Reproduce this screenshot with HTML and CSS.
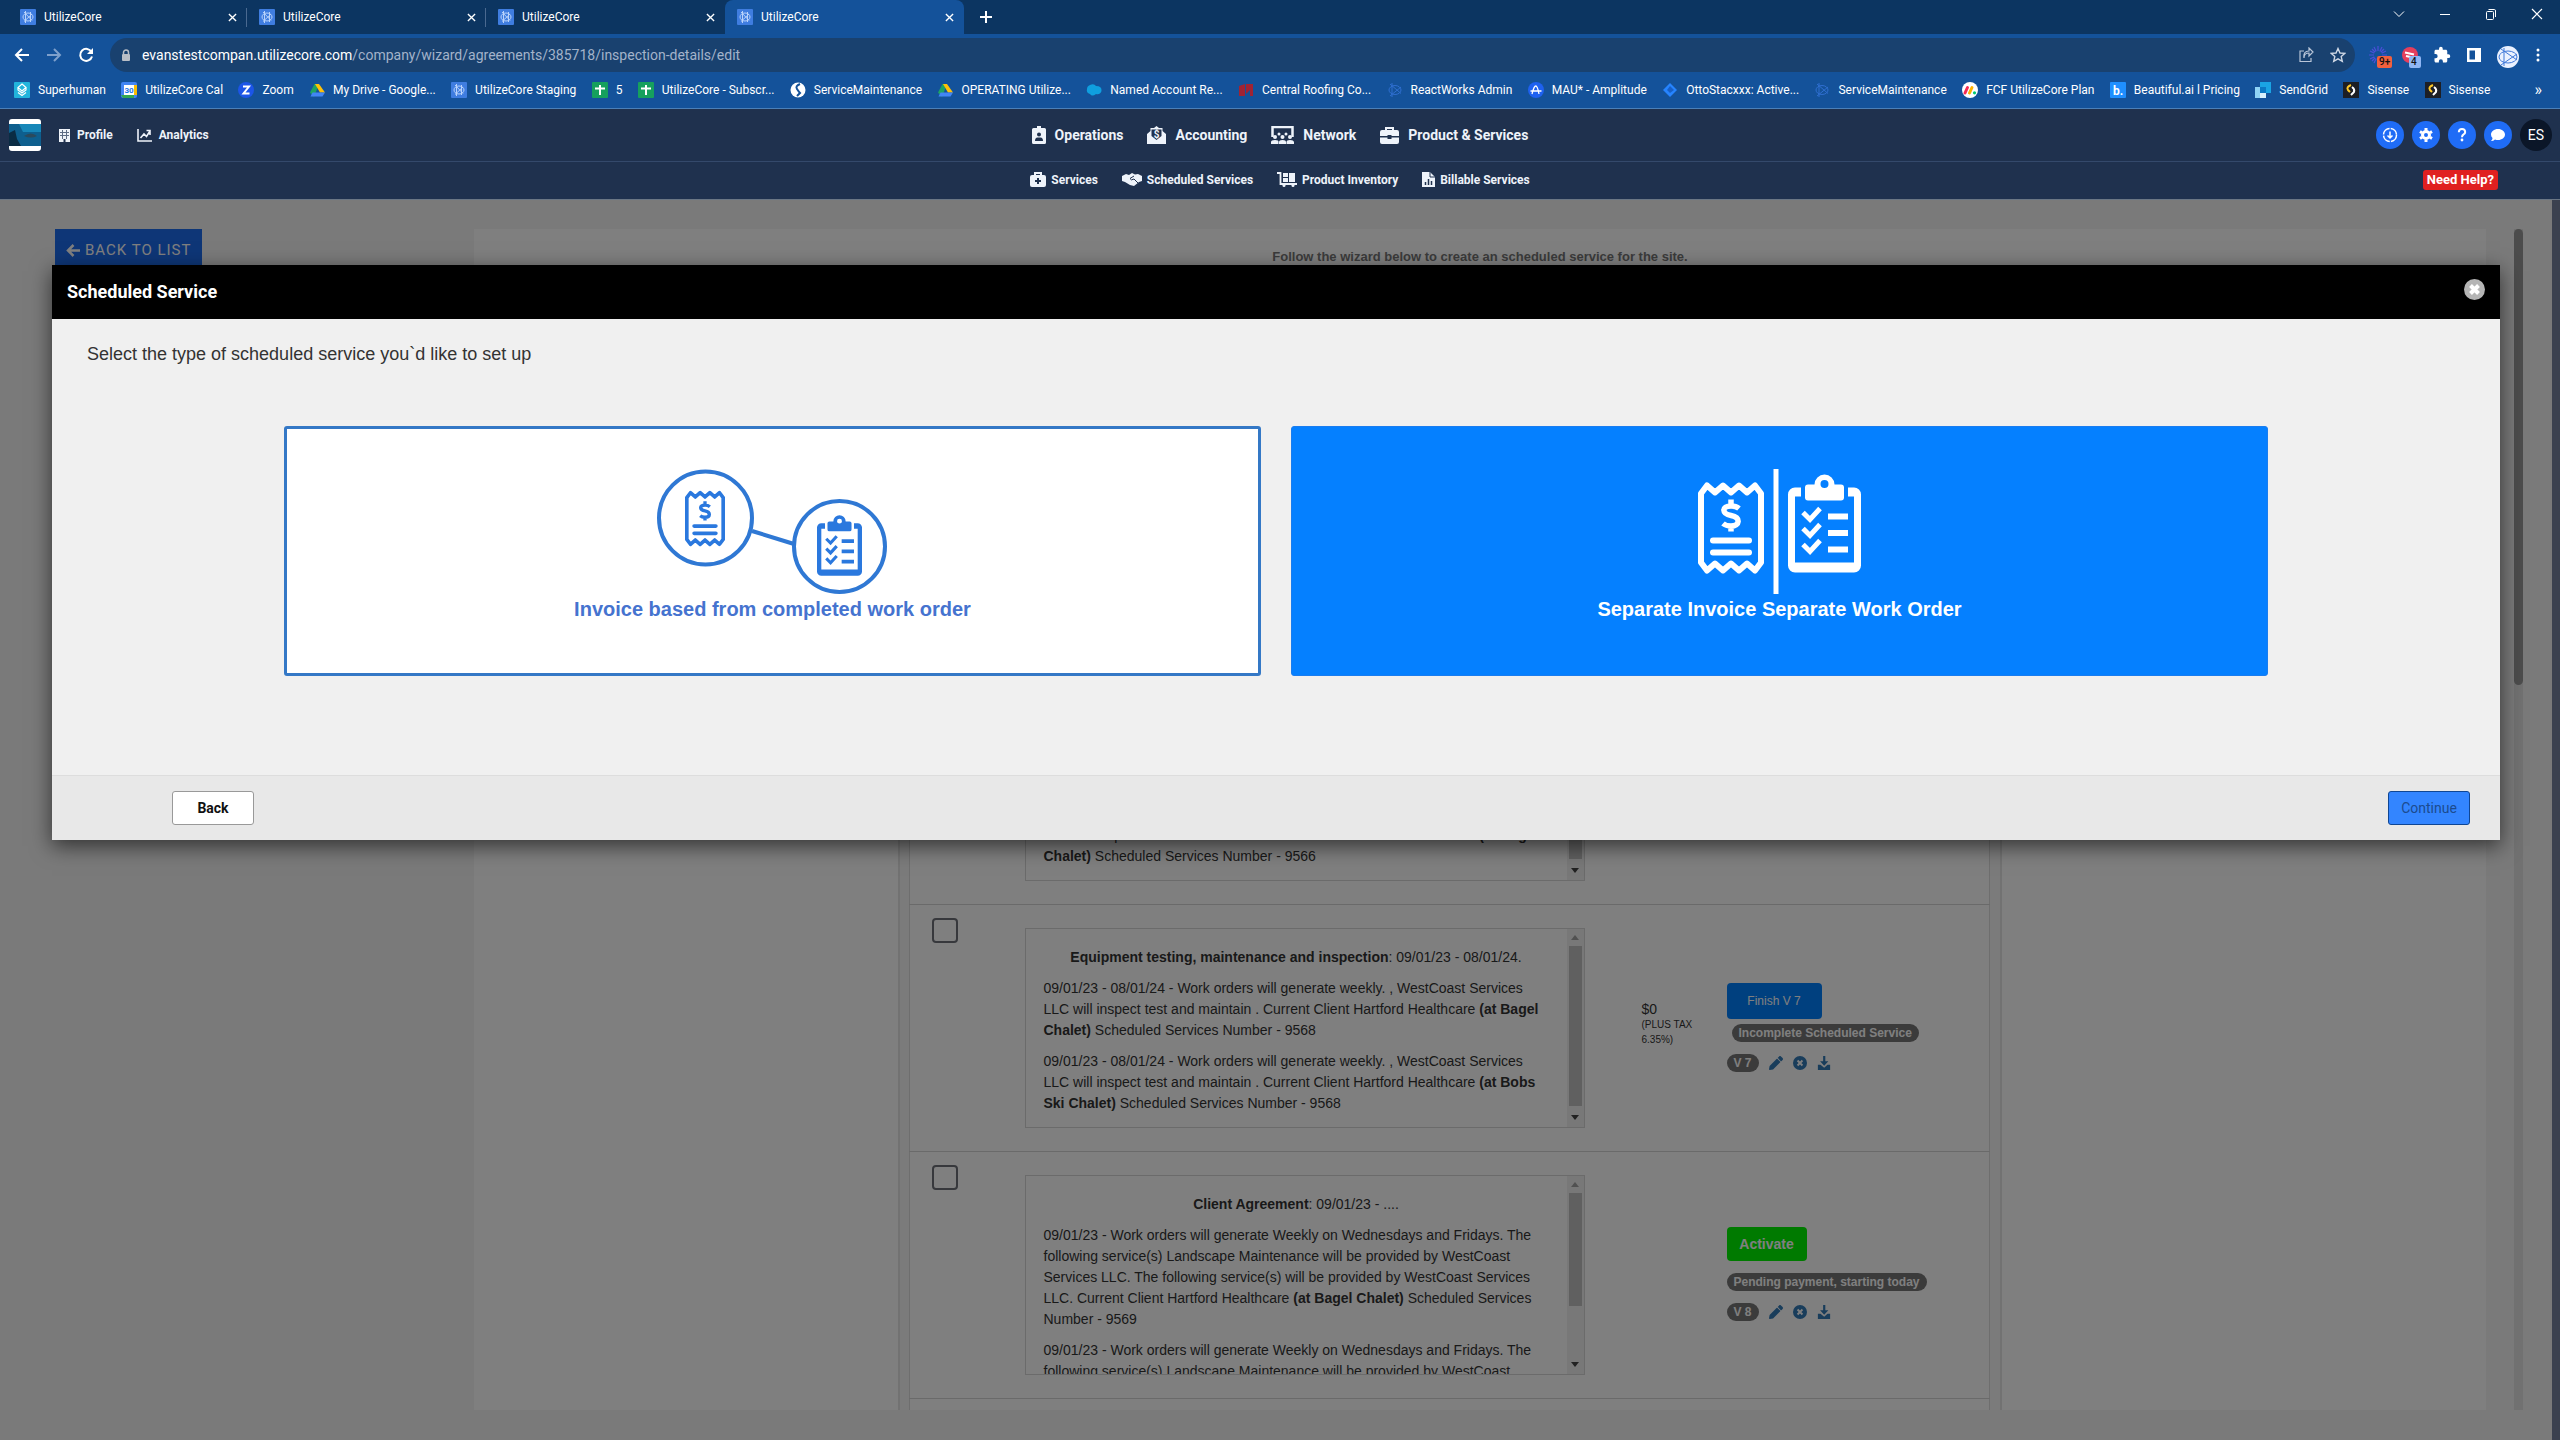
FILE: index.html
```html
<!DOCTYPE html>
<html lang="en">
<head>
<meta charset="utf-8">
<title>UtilizeCore</title>
<link rel="stylesheet" href="styles.css">
</head>
<body>
<svg class="sprite" aria-hidden="true">
  <symbol id="i-core" viewBox="0 0 16 16"><rect width="16" height="16" rx="1" fill="#3f7de0"/><g fill="none" stroke="#b9d3fb" stroke-width="1"><path d="M5.500 2V14M4 3L12 11.500M12 5L4 12.500M10.500 3V13"/><ellipse cx="8" cy="8" rx="5" ry="4"/></g></symbol>
  <symbol id="i-core-dark" viewBox="0 0 16 16"><g fill="none" stroke="#2f6fd0" stroke-width="1"><path d="M5 1V15M3 2L14 11.500M14 5L3 14"/><ellipse cx="8" cy="8" rx="6" ry="4.500"/></g></symbol>
  <symbol id="i-x" viewBox="0 0 10 10"><path d="M1 1L9 9M9 1L1 9" stroke="currentColor" stroke-width="1.500"/></symbol>
  <symbol id="i-sheet" viewBox="0 0 16 16"><rect width="16" height="16" rx="1" fill="#16a05d"/><path d="M8 3V13M3 6.500H13" stroke="#fff" stroke-width="2"/></symbol>
  <symbol id="i-drive" viewBox="0 0 16 16"><path d="M5.500 2H10L5 15 1 10.500Z" fill="#1ea362"/><path d="M6 2H10L16 10.500H11Z" fill="#ffc107"/><path d="M3.500 10.500H16L13.500 14.500H1.500Z" fill="#4285f4"/></symbol>
  <symbol id="i-sisense" viewBox="0 0 16 16"><rect width="16" height="16" fill="#1d1f24"/><path d="M8 3Q3 5 5 8L7 10" fill="none" stroke="#ffc928" stroke-width="2"/><path d="M9 5Q12 7 11 10L8 13" fill="none" stroke="#fff" stroke-width="2"/></symbol>
  <symbol id="i-pencil" viewBox="0 0 512 512"><path fill="currentColor" d="M497.900 142.100l-46.100 46.100c-4.700 4.700-12.300 4.700-17 0l-111-111c-4.700-4.700-4.700-12.300 0-17l46.100-46.100c18.700-18.700 49.100-18.700 67.900 0l60.100 60.100c18.800 18.700 18.800 49.100 0 67.900zM284.200 99.800L21.600 362.400.4 483.900c-2.900 16.400 11.400 30.600 27.800 27.800l121.500-21.300 262.600-262.600c4.700-4.700 4.700-12.300 0-17l-111-111c-4.800-4.700-12.400-4.700-17.100 0z"/></symbol>
  <symbol id="i-remove" viewBox="0 0 16 16"><circle cx="8" cy="8" r="8" fill="currentColor"/><path d="M5.200 5.200L10.800 10.800M10.800 5.200L5.200 10.800" stroke="#fff" stroke-width="2.200"/></symbol>
  <symbol id="i-download" viewBox="0 0 16 16"><path fill="currentColor" d="M7 0h2.500v6H13L8.200 11 3.500 6H7zM1 10h3l4.200 3.500L12 10h3v6H1z"/></symbol>
  <symbol id="i-receipt" viewBox="0 0 66 95"><path d="M3 13L9 5 17 12 25 5 33 12 41 5 49 12 57 5 63 13V82L57 90 49 83 41 90 33 83 25 90 17 83 9 90 3 82Z" fill="none" stroke="currentColor" stroke-width="6" stroke-linejoin="round"/><path d="M15 60H51M15 72H51" stroke="currentColor" stroke-width="6" stroke-linecap="round"/><path d="M41 28Q38 25.500 33 25.500C23 25.500 24 33.500 33 35C43 37 42 45.500 33 45.500Q28 45.500 25 43M33 19V26M33 45V51" fill="none" stroke="currentColor" stroke-width="5.500"/></symbol>
  <symbol id="i-clipboard" viewBox="0 0 73 98"><path fill="currentColor" fill-rule="evenodd" d="M7 13H13V22H7V88H66V22H60V13H66A7 7 0 0 1 73 20V91A7 7 0 0 1 66 98H7A7 7 0 0 1 0 91V20A7 7 0 0 1 7 13ZM20 10H26.500A10 10 0 0 1 46.500 10H53A3 3 0 0 1 56 13V23A3 3 0 0 1 53 26H20A3 3 0 0 1 17 23V13A3 3 0 0 1 20 10ZM36.500 5.500A4 4 0 1 0 36.500 13.500 4 4 0 1 0 36.500 5.500Z"/><path d="M15 38L22 45 32 34M15 54L22 61 32 50M15 70L22 77 32 66" fill="none" stroke="currentColor" stroke-width="5"/><path d="M40 42H60M40 58.500H60M40 75H60" stroke="currentColor" stroke-width="6"/></symbol>
</svg>

<header class="browser">
  <div class="tabs">
    <div class="tab"><svg class="i16"><use href="#i-core"/></svg><span>UtilizeCore</span><button class="tab-x" aria-label="Close tab"><svg><use href="#i-x"/></svg></button></div>
    <div class="tab"><svg class="i16"><use href="#i-core"/></svg><span>UtilizeCore</span><button class="tab-x" aria-label="Close tab"><svg><use href="#i-x"/></svg></button></div>
    <div class="tab"><svg class="i16"><use href="#i-core"/></svg><span>UtilizeCore</span><button class="tab-x" aria-label="Close tab"><svg><use href="#i-x"/></svg></button></div>
    <div class="tab tab-active"><svg class="i16"><use href="#i-core"/></svg><span>UtilizeCore</span><button class="tab-x" aria-label="Close tab"><svg><use href="#i-x"/></svg></button></div>
    <button class="new-tab" aria-label="New tab"><svg width="12" height="12" viewBox="0 0 12 12"><path d="M6 0V12M0 6H12" stroke="#fff" stroke-width="2"/></svg></button>
    <div class="window-controls">
      <button aria-label="Search tabs"><svg viewBox="0 0 12 12"><path d="M1 3.500L6 8.500 11 3.500" fill="none" stroke="#fff"/></svg></button>
      <button aria-label="Minimize"><svg viewBox="0 0 12 12"><path d="M1 6.500H11" stroke="#fff"/></svg></button>
      <button aria-label="Restore"><svg viewBox="0 0 12 12"><path d="M3.500 1.500H9.500Q10.500 1.500 10.500 3V9" fill="none" stroke="#fff"/><rect x="1.500" y="3.500" width="7" height="8" rx="1" fill="none" stroke="#fff"/></svg></button>
      <button aria-label="Close"><svg viewBox="0 0 12 12"><path d="M1 1L11 11M11 1L1 11" stroke="#fff" stroke-width="1.200"/></svg></button>
    </div>
  </div>
  <div class="toolbar">
    <div class="nav-buttons">
      <button aria-label="Back"><svg viewBox="0 0 16 16"><path d="M15 8H2M8 2L2 8 8 14" fill="none" stroke="#fff" stroke-width="2"/></svg></button>
      <button aria-label="Forward"><svg viewBox="0 0 16 16"><path d="M1 8H14M8 2L14 8 8 14" fill="none" stroke="#7ea0cc" stroke-width="2"/></svg></button>
      <button aria-label="Reload"><svg viewBox="0 0 16 16"><path d="M13.500 5A6 6 0 1 0 14 9.500" fill="none" stroke="#fff" stroke-width="2"/><path d="M15 1V7H9Z" fill="#fff"/></svg></button>
    </div>
    <div class="url">
      <svg class="lock" viewBox="0 0 10 12"><path d="M2.500 5V3.500A2.500 2.500 0 0 1 7.500 3.500V5" fill="none" stroke="#b9bec6" stroke-width="1.500"/><rect x="1" y="5" width="8" height="7" rx="1" fill="#b9bec6"/></svg>
      <span class="url-text"><b>evanstestcompan.utilizecore.com</b>/company/wizard/agreements/385718/inspection-details/edit</span>
      <svg class="i16" viewBox="0 0 16 16"><path d="M6 4H2V14.500H13V11M6 11Q6 6 11 6V9L15 5 11 1V4Q5 4 6 11Z" fill="none" stroke="#b8c5d8" stroke-width="1.200"/></svg>
      <svg class="i16" viewBox="0 0 16 16"><path d="M8 1.500L10 6 14.800 6.400 11.200 9.600 12.300 14.300 8 11.800 3.700 14.300 4.800 9.600 1.200 6.400 6 6Z" fill="none" stroke="#d0d9e6" stroke-width="1.400"/></svg>
    </div>
    <div class="extensions">
      <span class="ext"><svg viewBox="0 0 18 18"><path d="M9 0V18M0 9H18M3 3L15 15M15 3L3 15M5 1L13 17M13 1L5 17M1 5L17 13M17 5L1 13" stroke="#4b4fd8" stroke-width="1.200"/><circle cx="9" cy="9" r="4" fill="#14529a"/></svg><i class="count count-red">9+</i></span>
      <span class="ext"><svg viewBox="0 0 18 18"><circle cx="9" cy="9" r="8" fill="#e53e5c"/><path d="M4 6.500L13 8.500M5 10L14 12" stroke="#fff" stroke-width="2"/></svg><i class="count count-blue">4</i></span>
      <span class="ext"><svg viewBox="0 0 24 24"><path fill="#fff" d="M20.500 11H19V7c0-1.100-.9-2-2-2h-4V3.500a2.500 2.500 0 0 0-5 0V5H4c-1.100 0-2 .9-2 2v3.800h1.500a2.700 2.700 0 0 1 0 5.400H2V20c0 1.100.9 2 2 2h3.800v-1.500a2.700 2.700 0 0 1 5.400 0V22H17c1.100 0 2-.9 2-2v-4h1.500a2.500 2.500 0 0 0 0-5z"/></svg></span>
      <span class="ext"><svg viewBox="0 0 18 18"><path fill="#fff" fill-rule="evenodd" d="M2 2H16V16H2ZM4.500 4.500H10V13.500H4.500Z"/></svg></span>
      <span class="ext ext-avatar"><svg viewBox="0 0 22 22"><circle cx="11" cy="11" r="11" fill="#eaf1ff"/><g fill="none" stroke="#3f78d8"><path d="M7 2V20M4 3L20 14M4 19L20 8"/><ellipse cx="11" cy="11" rx="9" ry="6"/></g></svg></span>
      <span class="ext"><svg viewBox="0 0 18 18"><g fill="#fff"><circle cx="9" cy="4" r="1.500"/><circle cx="9" cy="9" r="1.500"/><circle cx="9" cy="14" r="1.500"/></g></svg></span>
    </div>
  </div>
  <nav class="bookmarks">
    <div class="bookmark-list">
      <a href="#"><svg class="i16" viewBox="0 0 16 16"><rect width="16" height="16" rx="1" fill="#22b4dc"/><path d="M8 2L12 5.500 8 9 4 5.500ZM4 10.500L8 13.500 12 10.500M4 6V8L8 11 12 8V6" fill="none" stroke="#fff" stroke-width="1.200"/></svg>Superhuman</a>
      <a href="#"><svg class="i16" viewBox="0 0 16 16"><rect width="16" height="16" rx="2" fill="#4285f4"/><path d="M13 3H16V13H13Z" fill="#fbbc04"/><path d="M0 13H13V16H2Z" fill="#34a853"/><rect x="3" y="3" width="10" height="10" fill="#fff"/><text x="8" y="11" text-anchor="middle" font-family="Roboto, sans-serif" font-size="8" font-weight="700" fill="#1a73e8">30</text></svg>UtilizeCore Cal</a>
      <a href="#"><svg class="i16" viewBox="0 0 16 16"><circle cx="8" cy="8" r="8" fill="#1c55e8"/><path d="M5 4.500H11L5.500 11.500H11.500" fill="none" stroke="#fff" stroke-width="2"/></svg>Zoom</a>
      <a href="#"><svg class="i16"><use href="#i-drive"/></svg>My Drive - Google...</a>
      <a href="#"><svg class="i16"><use href="#i-core"/></svg>UtilizeCore Staging</a>
      <a href="#"><svg class="i16"><use href="#i-sheet"/></svg>5</a>
      <a href="#"><svg class="i16"><use href="#i-sheet"/></svg>UtilizeCore - Subscr...</a>
      <a href="#"><svg class="i16" viewBox="0 0 16 16"><circle cx="8" cy="8" r="7.500" fill="#fff"/><path d="M10 2Q5 4 7 7T10 11L7 14" fill="none" stroke="#14529a" stroke-width="2"/></svg>ServiceMaintenance</a>
      <a href="#"><svg class="i16"><use href="#i-drive"/></svg>OPERATING Utilize...</a>
      <a href="#"><svg class="i16" viewBox="0 0 16 16"><path d="M4 3Q8 1 10 4Q16 4 15.500 9Q14 13 10 12Q6 15 4 12Q0 11 1 7Q1 4 4 3Z" fill="#0f9fdf"/></svg>Named Account Re...</a>
      <a href="#"><svg class="i16" viewBox="0 0 16 16"><path d="M1 4L7 2V14H1ZM8 2H15V14H12V8L8 12Z" fill="#a02333"/></svg>Central Roofing Co...</a>
      <a href="#"><svg class="i16"><use href="#i-core-dark"/></svg>ReactWorks Admin</a>
      <a href="#"><svg class="i16" viewBox="0 0 16 16"><circle cx="8" cy="8" r="8" fill="#1e61f0"/><path d="M2.500 9H13.500M4 12Q8-4 11 12" fill="none" stroke="#fff" stroke-width="1.300"/></svg>MAU* - Amplitude</a>
      <a href="#"><svg class="i16" viewBox="0 0 16 16"><path d="M8 1L15 8 8 15 1 8Z" fill="#2684ff"/><path d="M8 4L12 8 8 11 5 8Z" fill="#1760c8"/></svg>OttoStacxxx: Active...</a>
      <a href="#"><svg class="i16"><use href="#i-core-dark"/></svg>ServiceMaintenance</a>
      <a href="#"><svg class="i16" viewBox="0 0 16 16"><circle cx="8" cy="8" r="8" fill="#fff"/><path d="M3 11L5.500 5.500" stroke="#f62b54" stroke-width="3" stroke-linecap="round"/><path d="M7.500 11L10 5.500" stroke="#ffb400" stroke-width="3" stroke-linecap="round"/><circle cx="12.500" cy="10.800" r="1.600" fill="#00ca72"/></svg>FCF UtilizeCore Plan</a>
      <a href="#"><svg class="i16" viewBox="0 0 16 16"><rect width="16" height="16" rx="1" fill="#1f8fff"/><text x="8" y="13" text-anchor="middle" font-family="Roboto, sans-serif" font-size="12" font-weight="700" fill="#fff">b.</text></svg>Beautiful.ai l Pricing</a>
      <a href="#"><svg class="i16" viewBox="0 0 16 16"><path d="M5 0H16V11H5Z" fill="#1aa4e4"/><path d="M0 5H5V16H0Z" fill="#8fd3f5"/><path d="M5 11H11V16H5Z" fill="#d8f0fc"/><path d="M5 5H11V11H5Z" fill="#0b78c4"/></svg>SendGrid</a>
      <a href="#"><svg class="i16"><use href="#i-sisense"/></svg>Sisense</a>
      <a href="#"><svg class="i16"><use href="#i-sisense"/></svg>Sisense</a>
    </div>
    <button class="more" aria-label="More bookmarks">»</button>
  </nav>
</header>

<div class="app-nav">
  <div class="nav-left">
    <a href="#" class="logo" aria-label="Company"><svg viewBox="0 0 32 32"><rect width="32" height="32" rx="3" fill="#fff"/><path d="M0 5H32V27H0Z" fill="#0e5f8e"/><path d="M10 5H32V13H14Z" fill="#1787b8"/><path d="M0 14L6 11 8 20 12 27H0Z" fill="#0a2c44"/><path d="M15 17Q22 12 28 17Q22 20 15 17Z" fill="#2b4a5c"/></svg></a>
    <a href="#"><svg width="11" height="13" viewBox="0 0 11 13"><rect width="11" height="13" fill="#eef3fa"/><path d="M3.500 1V10M7.500 1V10M1 3.500H10M1 6.500H10" stroke="#5b6b84"/><path d="M4.500 10H6.500V13H4.500Z" fill="#1f314e"/></svg>Profile</a>
    <a href="#"><svg width="15" height="13" viewBox="0 0 15 13"><path d="M1 0V12H15M3.500 9L7 5 9.500 7.500 13 2M13 6V1.500H9.500" fill="none" stroke="#eef3fa" stroke-width="1.600"/></svg>Analytics</a>
  </div>
  <nav class="nav-center">
    <a href="#"><svg width="14" height="18" viewBox="0 0 14 18"><path fill="currentColor" fill-rule="evenodd" d="M5 0H9V2H12.500A1.500 1.500 0 0 1 14 3.500V16.500A1.500 1.500 0 0 1 12.500 18H1.500A1.500 1.500 0 0 1 0 16.500V3.500A1.500 1.500 0 0 1 1.500 2H5ZM7 6.500A2 2 0 1 0 7 10.500 2 2 0 1 0 7 6.500ZM3 15H11Q11 11.500 8.500 11.500H5.500Q3 11.500 3 15Z"/></svg>Operations</a>
    <a href="#"><svg width="19" height="18" viewBox="0 0 19 18"><path fill="currentColor" d="M0 8L3.500 5V2H7L9.500 0 12 2H15.500V5L19 8V18H0Z"/><path d="M4.500 3.500H14.500V10L9.500 14 4.500 10Z" fill="#1f314e"/><text x="9.500" y="12" text-anchor="middle" font-family="Roboto, sans-serif" font-size="10" font-weight="700" fill="currentColor">$</text></svg>Accounting</a>
    <a href="#"><svg width="23" height="18" viewBox="0 0 23 18"><path d="M1.500 11V1H21.500V11" fill="none" stroke="currentColor" stroke-width="2.500"/><g fill="currentColor"><circle cx="4" cy="11" r="2"/><circle cx="11.500" cy="11" r="2"/><circle cx="19" cy="11" r="2"/><circle cx="8" cy="8" r="1.500"/><circle cx="15" cy="8" r="1.500"/><path d="M0 18V16Q0 14 4 14T7.500 16V18ZM8 18V16Q8 14 11.500 14T15 16V18ZM15.500 18V16Q15.500 14 19 14T23 16V18Z"/></g></svg>Network</a>
    <a href="#"><svg width="19" height="18" viewBox="0 0 19 18"><path d="M6 5V2H13V5" fill="none" stroke="currentColor" stroke-width="2"/><path fill="currentColor" d="M2 4H17A2 2 0 0 1 19 6V10H11.500V9H7.500V10H0V6A2 2 0 0 1 2 4ZM0 11.500H7.500V13H11.500V11.500H19V16A2 2 0 0 1 17 18H2A2 2 0 0 1 0 16Z"/></svg>Product &amp; Services</a>
  </nav>
  <div class="nav-right">
    <button class="round" aria-label="Downloads"><svg viewBox="0 0 16 16"><circle cx="8" cy="8" r="6.500" fill="none" stroke="#fff" stroke-width="1.500" stroke-dasharray="9 1.200"/><path d="M8 4.500V11M5.500 8.500L8 11 10.500 8.500" fill="none" stroke="#fff" stroke-width="1.500"/></svg></button>
    <button class="round" aria-label="Settings"><svg viewBox="0 0 16 16"><circle cx="8" cy="8" r="3.500" fill="none" stroke="#fff" stroke-width="3"/><path d="M8 1V3.500M8 12.500V15M2 4.500L4 5.700M12 10.300L14 11.500M2 11.500L4 10.300M12 5.700L14 4.500" stroke="#fff" stroke-width="3"/></svg></button>
    <button class="round" aria-label="Help"><svg viewBox="0 0 16 16"><path d="M4.800 5.200Q5 2 8 2T11.200 5Q11.200 6.500 9.500 7.500 8 8.300 8 10.200" fill="none" stroke="#fff" stroke-width="2"/><circle cx="8" cy="13" r="1.400" fill="#fff"/></svg></button>
    <button class="round" aria-label="Chat"><svg viewBox="0 0 16 16"><path d="M8 2C12 2 15 4.500 15 7.500S12 13 8 13Q6.500 13 5 12.500 3.500 14 1 14 2.800 12 2.500 11 1 9.500 1 7.500C1 4.500 4 2 8 2Z" fill="#fff"/></svg></button>
    <button class="round user">ES</button>
  </div>
</div>
<div class="sub-nav">
  <nav class="nav-center">
    <a href="#"><svg width="16" height="15" viewBox="0 0 16 15"><path d="M5 4V1H11V4" fill="none" stroke="currentColor" stroke-width="2"/><rect y="3" width="16" height="12" rx="2" fill="currentColor"/><path d="M8 6V12M5 9H11" stroke="#1f314e" stroke-width="2"/></svg>Services</a>
    <a href="#"><svg width="20" height="13" viewBox="0 0 20 13"><path fill="currentColor" d="M0 3L4 1 7 2 10 0 13 1.500 16 1 20 3V8L17 9 12 13 8 12 3 9 0 8Z"/><path d="M12 3L8 5.500Q9 8 12 6L16 10" fill="none" stroke="#1f314e"/></svg>Scheduled Services</a>
    <a href="#"><svg width="20" height="15" viewBox="0 0 20 15"><path d="M0 1H3.500V12H20" fill="none" stroke="currentColor" stroke-width="1.800"/><path d="M6 1H11V5H6ZM12 1H18V10H12ZM6 6H11V10H6Z" fill="currentColor"/><circle cx="7" cy="13.500" r="1.500" fill="currentColor"/><circle cx="16" cy="13.500" r="1.500" fill="currentColor"/></svg>Product Inventory</a>
    <a href="#"><svg width="13" height="15" viewBox="0 0 13 15"><path d="M0 0H8L13 5V15H0Z" fill="currentColor"/><path d="M8 0V5H13" fill="none" stroke="#1f314e"/><path d="M3.500 13V10M6.500 13V7M9.500 13V9" stroke="#1f314e" stroke-width="1.500"/></svg>Billable Services</a>
  </nav>
  <a href="#" class="need-help">Need Help?</a>
</div>

<div class="stage">
  <main class="page">
    <div class="side"><button class="back-list"><svg width="14" height="13" viewBox="0 0 14 13"><path d="M14 6.500H2M7.500 1L2 6.500 7.500 12" fill="none" stroke="currentColor" stroke-width="2.500"/></svg>BACK TO LIST</button></div>
    <section class="panel">
      <p class="intro">Follow the wizard below to create an scheduled service for the site.</p>
      <div class="wizard">
        <table class="services">
          <colgroup><col class="c-check"><col class="c-text"><col class="c-price"><col></colgroup>
          <tr>
            <td></td>
            <td class="desc"><div class="box"><div class="box-text box-text-end"><p>09/01/23 - 08/01/24 - Work orders will generate weekly. , WestCoast Services LLC will inspect test and maintain . Current Client Hartford Healthcare <b>(at Bagel Chalet)</b> Scheduled Services Number - 9566</p></div><div class="bar"><i class="up"></i><span class="thumb"></span><i class="down"></i></div></div></td>
            <td></td><td></td>
          </tr>
          <tr>
            <td class="check"><input type="checkbox" aria-label="Select service 9568"></td>
            <td class="desc"><div class="box"><div class="box-text"><p class="title"><b>Equipment testing, maintenance and inspection</b>: 09/01/23 - 08/01/24.</p><p>09/01/23 - 08/01/24 - Work orders will generate weekly. , WestCoast Services LLC will inspect test and maintain . Current Client Hartford Healthcare <b>(at Bagel Chalet)</b> Scheduled Services Number - 9568</p><p>09/01/23 - 08/01/24 - Work orders will generate weekly. , WestCoast Services LLC will inspect test and maintain . Current Client Hartford Healthcare <b>(at Bobs Ski Chalet)</b> Scheduled Services Number - 9568</p></div><div class="bar"><i class="up"></i><span class="thumb"></span><i class="down"></i></div></div></td>
            <td class="price">$0<small>(PLUS TAX 6.35%)</small></td>
            <td class="actions"><button class="finish">Finish V 7</button><div class="status status-in"><span class="badge">Incomplete Scheduled Service</span></div><div class="tools"><span class="badge">V 7</span><a href="#" aria-label="Edit"><svg><use href="#i-pencil"/></svg></a><a href="#" aria-label="Remove"><svg><use href="#i-remove"/></svg></a><a href="#" aria-label="Download"><svg><use href="#i-download"/></svg></a></div></td>
          </tr>
          <tr>
            <td class="check"><input type="checkbox" aria-label="Select service 9569"></td>
            <td class="desc"><div class="box"><div class="box-text"><p class="title"><b>Client Agreement</b>: 09/01/23 - ....</p><p>09/01/23 - Work orders will generate Weekly on Wednesdays and Fridays. The following service(s) Landscape Maintenance will be provided by WestCoast Services LLC. The following service(s) will be provided by WestCoast Services LLC. Current Client Hartford Healthcare <b>(at Bagel Chalet)</b> Scheduled Services Number - 9569</p><p>09/01/23 - Work orders will generate Weekly on Wednesdays and Fridays. The following service(s) Landscape Maintenance will be provided by WestCoast</p></div><div class="bar"><i class="up"></i><span class="thumb thumb-short"></span><i class="down"></i></div></div></td>
            <td></td>
            <td class="actions"><button class="activate">Activate</button><div class="status"><span class="badge">Pending payment, starting today</span></div><div class="tools"><span class="badge">V 8</span><a href="#" aria-label="Edit"><svg><use href="#i-pencil"/></svg></a><a href="#" aria-label="Remove"><svg><use href="#i-remove"/></svg></a><a href="#" aria-label="Download"><svg><use href="#i-download"/></svg></a></div></td>
          </tr>
          <tr class="next"><td></td><td></td><td></td><td></td></tr>
        </table>
      </div>
    </section>
    <div class="page-scroll"><span></span></div>
  </main>
  <div class="edge"></div>
  <div class="overlay">
    <section class="modal" role="dialog" aria-labelledby="dlg-title">
      <header class="modal-head"><h1 id="dlg-title">Scheduled Service</h1><button class="close" aria-label="Close"><svg viewBox="0 0 21 21"><circle cx="10.500" cy="10.500" r="10.500" fill="#b5b5b5"/><path d="M6.500 6.500L14.500 14.500M14.500 6.500L6.500 14.500" stroke="#fff" stroke-width="4"/></svg></button></header>
      <div class="modal-body">
        <p>Select the type of scheduled service you`d like to set up</p>
        <div class="choices">
          <button class="choice">
            <svg width="232" height="126" viewBox="0 0 232 126"><g fill="none" stroke="#2f78d4" stroke-width="4"><circle cx="48.500" cy="49" r="46.500"/><circle cx="182.500" cy="77.500" r="45.500"/><path d="M95 62L137 75"/></g><use href="#i-receipt" x="28" y="20" width="40" height="59"/><use href="#i-clipboard" x="160" y="46" width="45" height="61"/></svg>
            Invoice based from completed work order
          </button>
          <button class="choice choice-solid">
            <svg width="164" height="126" viewBox="0 0 164 126"><use href="#i-receipt" x="0" y="11" width="66" height="96"/><path d="M78 0V125" stroke="currentColor" stroke-width="5"/><use href="#i-clipboard" x="90" y="5" width="73" height="99"/></svg>
            Separate Invoice Separate Work Order
          </button>
        </div>
      </div>
      <footer class="modal-foot"><button class="btn-back">Back</button><button class="btn-continue">Continue</button></footer>
    </section>
  </div>
</div>
</body>
</html>
```
FILE: styles.css
```css
* { box-sizing: border-box; }
body { margin: 0; height: 100vh; display: flex; flex-direction: column; overflow: hidden; font-family: "Liberation Sans", Arial, sans-serif; font-size: 14px; color: #333; }
button { font: inherit; color: inherit; border: 0; padding: 0; background: none; }
a { color: inherit; text-decoration: none; }
p, h1 { margin: 0; }
svg { display: block; flex: none; }
.sprite { position: absolute; width: 0; height: 0; }
.i16 { width: 16px; height: 16px; }

/* browser frame */
.browser { flex: none; height: 109px; background: #14529a; border-bottom: 1px solid #4a7fb8; color: #fff; font: 12px/16px Roboto, sans-serif; }
.tabs { display: flex; height: 34px; background: #0c3561; padding-left: 8px; }
.tab { width: 239px; display: flex; align-items: center; gap: 8px; padding: 0 9px 0 12px; position: relative; }
.tab:nth-child(-n+2)::after { content: ""; position: absolute; right: 0; top: 8px; width: 1px; height: 19px; background: #4a6990; }
.tab-active { background: #14529a; border-radius: 8px 8px 0 0; }
.tab-x { margin-left: auto; width: 12px; height: 12px; display: grid; place-items: center; }
.tab-x svg { width: 9px; height: 9px; }
.new-tab { width: 44px; display: grid; place-items: center; }
.window-controls { margin-left: auto; display: flex; height: 28px; }
.window-controls button { width: 46px; display: grid; place-items: center; }
.window-controls svg { width: 12px; height: 12px; }
.toolbar { display: flex; align-items: center; height: 42px; }
.nav-buttons { width: 110px; display: flex; gap: 16px; padding-left: 14px; }
.nav-buttons svg { width: 16px; height: 16px; }
.url { flex: 1; height: 34px; border-radius: 17px; background: #19416f; display: flex; align-items: center; gap: 16px; padding: 0 9px 0 11px; }
.lock { width: 10px; height: 12px; margin-right: -5px; }
.url-text { flex: 1; font-size: 14px; color: #a3b3ca; }
.url-text b { font-weight: 400; color: #fff; }
.extensions { display: flex; gap: 14px; padding: 0 13px 0 14px; align-items: center; }
.ext { width: 18px; height: 18px; position: relative; display: grid; place-items: center; }
.ext svg { width: 18px; height: 18px; }
.ext-avatar svg { width: 22px; height: 22px; }
.count { position: absolute; left: 8px; top: 10px; min-width: 12px; padding: 0 2px; border-radius: 2px; font: 500 10px/12px Roboto, sans-serif; color: #111; }
.count-red { background: #f2603e; }
.count-blue { background: #8fb6f5; }
.bookmarks { display: flex; align-items: center; height: 28px; padding: 0 18px 0 14px; }
.bookmark-list { flex: 1; display: flex; justify-content: space-between; margin-right: 44px; }
.bookmark-list a { display: flex; align-items: center; gap: 8px; white-space: nowrap; }
.more { font-size: 16px; }

/* application navigation */
.app-nav, .sub-nav { flex: none; display: grid; grid-template-columns: 1fr auto 1fr; align-items: center; background: #1f314e; color: #eef3fa; font-family: Roboto, sans-serif; font-weight: 700; font-size: 12px; }
.app-nav { height: 53px; border-bottom: 1px solid #34496b; }
.sub-nav { height: 38px; border-bottom: 1px solid #6a7684; padding-bottom: 2px; }
.nav-left, .nav-center, .nav-right { display: flex; align-items: center; }
.nav-left a, .nav-center a { display: flex; align-items: center; }
.nav-left { gap: 24px; padding-left: 9px; }
.nav-left a { gap: 7px; }
.nav-left .logo { margin-right: -6px; }
.logo svg { width: 32px; height: 32px; }
.nav-center { gap: 24px; }
.app-nav .nav-center a { gap: 9px; font-size: 14px; }
.sub-nav .nav-center { grid-column: 2; }
.sub-nav .nav-center a { gap: 5px; }
.nav-right { justify-content: flex-end; gap: 8px; padding-right: 8px; }
.round { width: 28px; height: 28px; border-radius: 50%; background: #1f6cf6; display: grid; place-items: center; }
.round svg { width: 16px; height: 16px; }
.user { width: 32px; height: 32px; background: #0b1628; font-size: 14px; font-weight: 400; color: #fff; }
.need-help { justify-self: end; margin-right: 62px; padding: 0 4px; border-radius: 3px; background: #e02020; color: #fff; font-size: 13px; line-height: 20px; }

/* wizard page below the dialog */
.stage { flex: 1; min-height: 0; display: flex; position: relative; overflow: hidden; }
.page { flex: 1; display: flex; padding: 29px 29px 30px 55px; background: #f4f4f4; min-width: 0; }
.edge { width: 8px; background: #76829e; }
.side { width: 419px; flex: none; }
.back-list { display: flex; align-items: center; gap: 5px; height: 42px; width: 147px; padding-left: 11px; background: #1c6cee; color: #fff; font: 15px/20px Roboto, sans-serif; letter-spacing: 1px; white-space: nowrap; }
.panel { flex: 1; min-width: 0; background: #fff; overflow: hidden; }
.intro { padding: 18px 0; text-align: center; font-size: 13px; line-height: 20px; font-weight: 700; color: #777; }
.wizard { margin: 372px 484px 0 424px; padding: 0 10px 0 9px; background: #f6f6f6; border: 2px solid #e4e4e4; border-top: 0; border-bottom: 0; }
.services { width: 100%; table-layout: fixed; border-collapse: collapse; background: #fff; border: 1px solid #ddd; border-bottom: 0; }
.services td { padding: 0; border-bottom: 1px solid #d4d4d4; }
.services .next td { height: 40px; }
.c-check { width: 115px; }
.c-text { width: 617px; }
.c-price { width: 85px; }
.services .check { vertical-align: top; padding: 13px 0 0 22px; }
.check input { appearance: none; display: block; margin: 0; width: 26px; height: 25px; border: 2px solid #6e7178; border-radius: 4px; background: #fff; }
.services .desc { padding: 23px 0; }
.box { display: flex; width: 560px; height: 200px; border: 1px solid #d6d6d6; overflow: hidden; }
.box-text { flex: 1; padding: 18px 18px; line-height: 21px; }
.box-text-end { padding-top: 122px; }
.box-text p { margin-bottom: 10px; }
.title { text-align: center; }
.bar { width: 17px; background: #f1f1f1; display: flex; flex-direction: column; align-items: center; flex: none; }
.bar i { width: 0; height: 0; border: 4px solid transparent; }
.bar .up { margin: 2px 0 6px; border-bottom: 5px solid #a3a3a3; }
.bar .down { margin: auto 0 3px; border-top: 5px solid #444; }
.thumb { width: 13px; height: 160px; background: #c1c1c1; }
.thumb-short { height: 113px; }
.services .price { padding-bottom: 8px; }
.price small { display: block; width: 60px; font-size: 10px; line-height: 15px; }
.actions button { display: block; border-radius: 4px; color: #fff; }
.services .actions { padding-bottom: 2px; }
.finish { width: 95px; height: 36px; background: #0080ff; font-size: 12px; }
.activate { width: 80px; height: 34px; margin-bottom: 12px; background: #00f400; font-weight: 700; }
.status { height: 18px; margin: 5px 0 12px; display: flex; }
.status-in { padding-left: 5px; }
.badge { padding: 0 7px; border-radius: 9px; background: #777; color: #fff; font-size: 12px; line-height: 18px; font-weight: 700; white-space: nowrap; }
.tools { display: flex; align-items: center; gap: 10px; color: #337ab7; }
.tools svg { width: 14px; height: 14px; }
.page-scroll { width: 9px; margin-left: 28px; background: #e2e2e2; }
.page-scroll span { display: block; height: 456px; border-radius: 5px; background: #999; }

/* dialog */
.overlay { position: absolute; inset: 0; background: rgba(0, 0, 0, .5); padding: 65px 60px 0 52px; }
.modal { box-shadow: 0 6px 20px rgba(0, 0, 0, .6); background: #f0f0f0; }
.modal-head { display: flex; align-items: center; justify-content: space-between; height: 54px; padding: 0 15px; background: #000; color: #fff; }
.modal-head h1 { font: 700 18px/24px Roboto, sans-serif; }
.close { width: 21px; height: 21px; margin: 0 0 6px; }
.modal-body { height: 456px; padding: 24px 35px; }
.modal-body p { font-size: 18px; line-height: 22px; }
.choices { display: grid; grid-template-columns: 1fr 1fr; gap: 30px; margin: 61px 197px 0; }
.choice { height: 250px; border: 3px solid #3478c6; border-radius: 3px; background: #fff; color: #4573cf; font-size: 20px; font-weight: 700; line-height: 24px; display: flex; flex-direction: column; align-items: center; gap: 2px; padding-top: 40px; }
.choice:first-child svg { color: #2a78de; }
.choice-solid { background: #0580ff; border-color: #1a7df0; border-width: 1px; padding-top: 42px; color: #fff; }
.modal-foot { display: flex; justify-content: space-between; align-items: center; height: 65px; padding: 0 30px 0 120px; border-top: 1px solid #ddd; background: #e8e8e8; font: 14px/20px Roboto, sans-serif; }
.modal-foot button { width: 82px; height: 34px; border-radius: 3px; }
.btn-back { background: #fff; border: 1px solid #999; color: #111; font-weight: 700; }
.btn-continue { background: #3385ff; border: 1px solid #0f4694; color: #1c4b8e; }
```
